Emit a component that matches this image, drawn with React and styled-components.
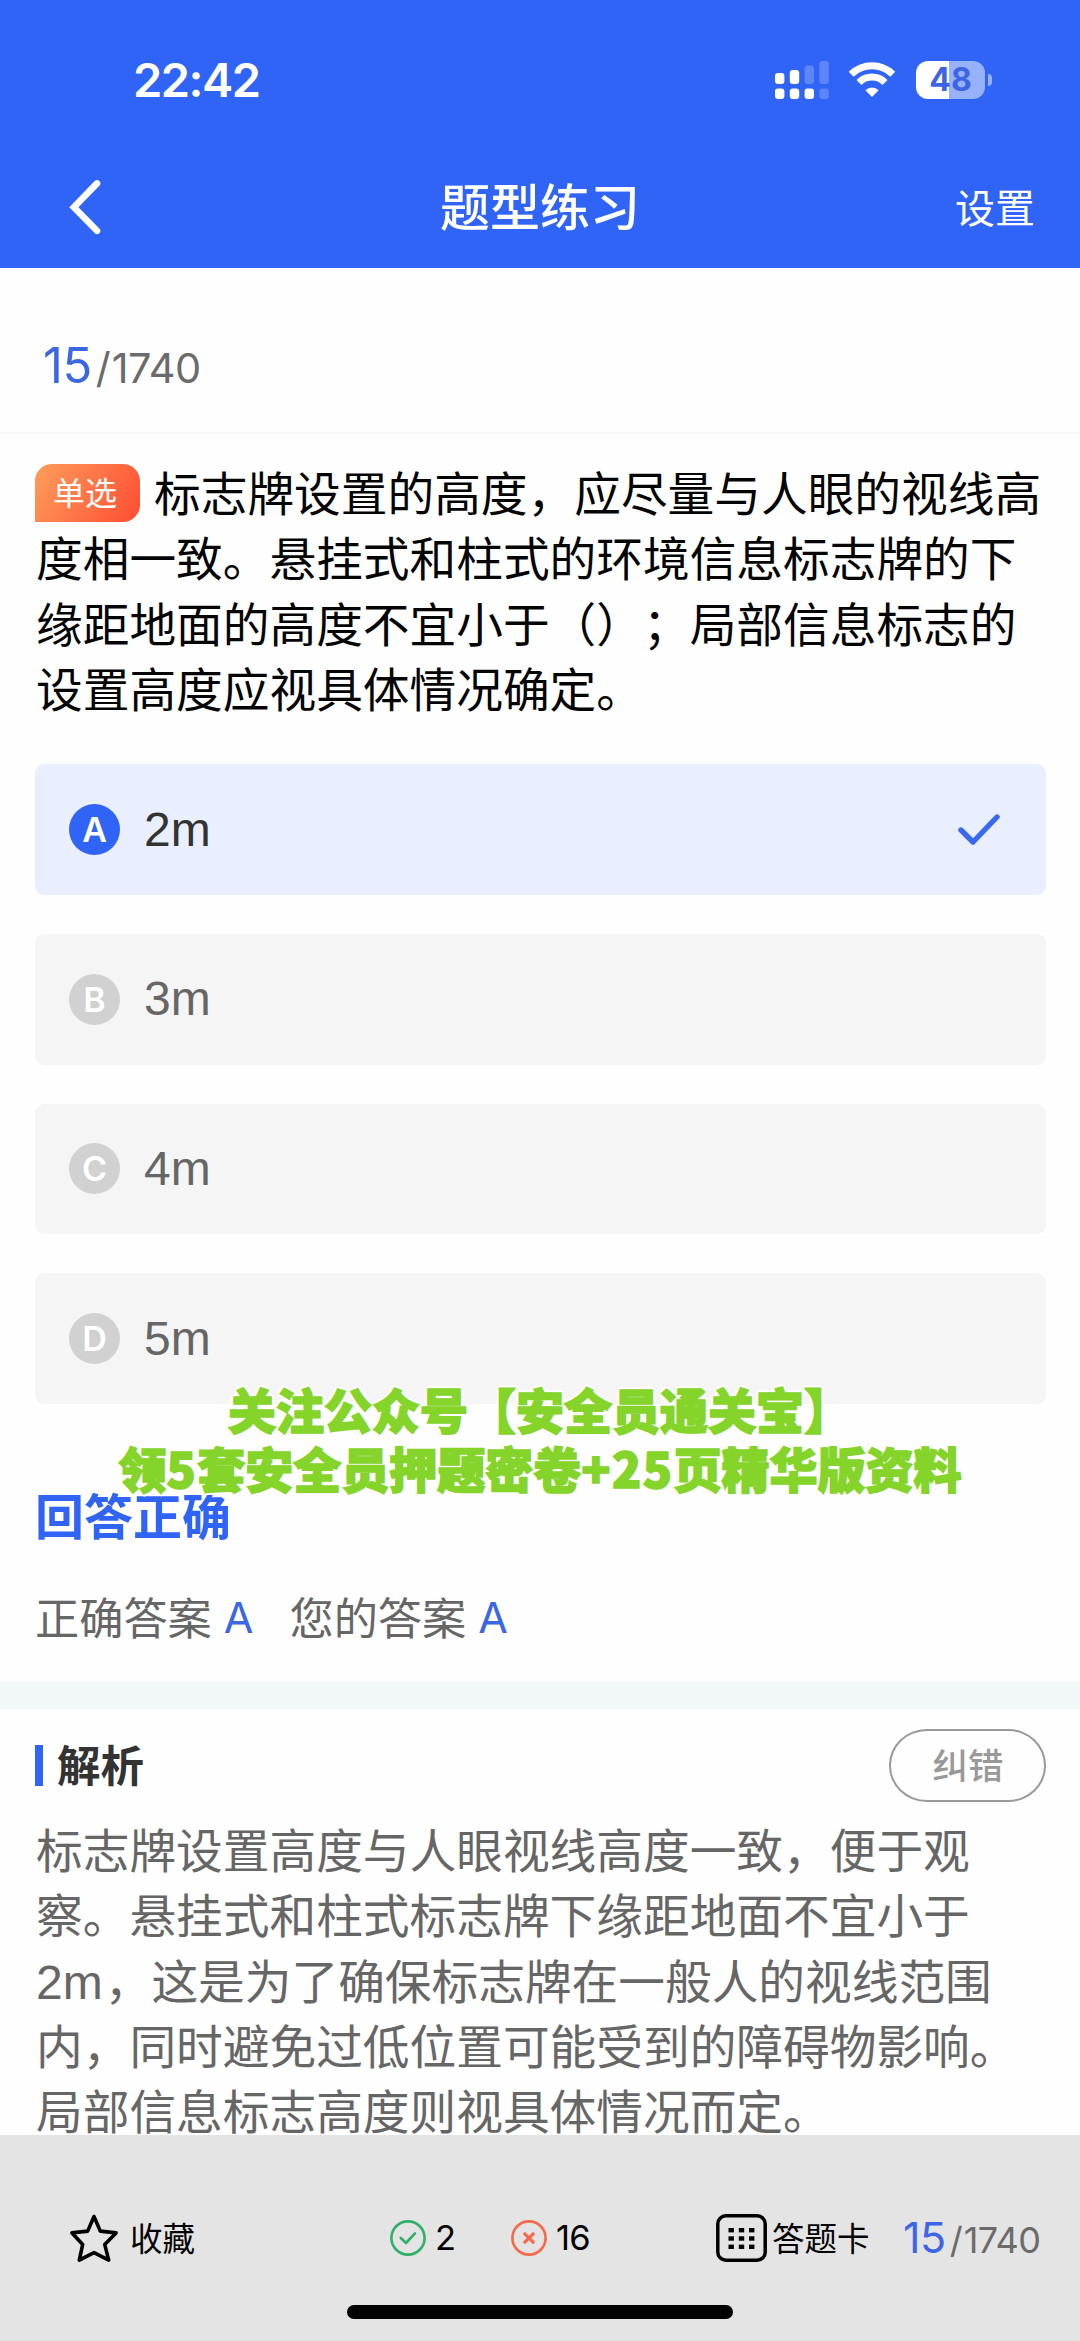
import React from "react";
import styled, { createGlobalStyle } from "styled-components";

const BLUE = "#3064f7";
const CJK = '"Noto Sans CJK SC", sans-serif';
const UI = 'Inter, "Noto Sans CJK SC", sans-serif';
const TEXT = '"Liberation Sans", "Noto Sans CJK SC", sans-serif';

const GlobalStyle = createGlobalStyle`
  *, *::before, *::after { box-sizing: border-box; }
  html, body { margin: 0; padding: 0; background: #fff; }
  body { text-spacing-trim: space-all; }
`;

const Screen = styled.div`
  position: relative;
  display: flex;
  flex-direction: column;
  width: 1080px;
  height: 2341px;
  overflow: hidden;
  background: #fefefe;
  font-family: ${CJK};
`;

const Header = styled.header`
  flex: none;
  height: 268px;
  background: ${BLUE};
  color: #fff;
`;

const StatusBar = styled.div`
  display: flex;
  justify-content: space-between;
  align-items: center;
  height: 160px;
  padding: 0 88px 0 133px;
`;

const Clock = styled.span`
  font: 600 47px/60px ${UI};
  letter-spacing: -1.5px;
`;

const StatusIcons = styled.div`
  display: flex;
  align-items: center;
`;

const Signal = styled.svg`
  width: 55px;
  height: 40px;
`;

const Wifi = styled.svg`
  width: 48px;
  height: 40px;
  margin-left: 18px;
`;

const Battery = styled.div`
  display: flex;
  align-items: center;
  justify-content: center;
  width: 69px;
  height: 38px;
  margin-left: 20px;
  border-radius: 12px;
  background: linear-gradient(90deg, #fff 33px, #98b1fb 33px);
  color: #3c65e6;
  font: 700 32px/38px ${UI};
`;

const BatteryCap = styled.span`
  width: 4px;
  height: 12px;
  margin-left: 3px;
  border-radius: 0 4px 4px 0;
  background: #98b1fb;
`;

const NavBar = styled.nav`
  display: grid;
  grid-template-columns: 200px 1fr 200px;
  align-items: center;
  height: 92px;
`;

const BackButton = styled.button`
  display: flex;
  width: 60px;
  margin-left: 60px;
  padding: 0;
  border: 0;
  background: none;
`;

const Title = styled.h1`
  margin: 0;
  padding-bottom: 5px;
  text-align: center;
  font: 500 50px/60px ${CJK};
`;

const Settings = styled.span`
  padding: 0 45px 1px 0;
  text-align: right;
  font: 400 40px/50px ${CJK};
`;

const ProgressRow = styled.div`
  flex: none;
  height: 166px;
  padding: 65px 0 0 43px;
  border-bottom: 2px solid #f7f7f7;
`;

const Counter = styled.div`
  font: 400 ${(p) => p.$total}px/66px ${UI};
  letter-spacing: ${(p) => p.$track}px;
  color: #6b6b6b;
  white-space: nowrap;

  b {
    font-size: ${(p) => p.$current}px;
    font-weight: 400;
    color: #3b66e6;
    margin-right: ${(p) => p.$gap}px;
  }

  i {
    font-style: normal;
    margin-right: 1.5px;
  }
`;

const Question = styled.p`
  flex: none;
  width: 1020px;
  margin: 29px 0 0 36px;
  color: #050505;
  font: 400 46.7px/65.3px ${TEXT};
`;

const Tag = styled.span`
  display: inline-block;
  width: 105px;
  height: 58px;
  margin: -6px 14px 0 -1px;
  padding-right: 5px;
  border-radius: 17px 17px 17px 0;
  background: linear-gradient(120deg, #ff9d5a, #ff4d33);
  color: #fff;
  text-align: center;
  font: 400 32px/55px ${CJK};
  vertical-align: 6px;
`;

const Options = styled.div`
  flex: none;
  display: flex;
  flex-direction: column;
  gap: 39px;
  margin: 40px 34px 0 35px;
`;

const Option = styled.div`
  display: flex;
  align-items: center;
  height: 130.7px;
  padding: 0 46px 0 34px;
  border-radius: 9px;
  background: ${(p) => (p.$selected ? "#e9effe" : "#f5f5f5")};
  color: ${(p) => (p.$selected ? "#333" : "#666")};
`;

const Letter = styled.span`
  width: 51px;
  height: 51px;
  border-radius: 50%;
  background: ${(p) => (p.$selected ? BLUE : "#d1d1d1")};
  color: #fff;
  text-align: center;
  font: 600 34px/51px ${UI};
`;

const OptionText = styled.span`
  flex: 1;
  padding-left: 24px;
  font: 400 48px/60px ${TEXT};
`;

const Verdict = styled.div`
  flex: none;
  margin: 77px 35px 0;
  color: ${BLUE};
  font: 700 49px/66px ${CJK};
`;

const Answers = styled.div`
  flex: none;
  display: flex;
  gap: 36px;
  margin: 39px 35px 0;
  color: #666;
  font: 400 44.2px/60px ${CJK};
`;

const Answer = styled.span`
  display: flex;
  gap: 12px;

  b {
    color: #3b66e6;
    font: 400 43px/62px ${UI};
  }
`;

const Divider = styled.div`
  flex: none;
  height: 27px;
  margin-top: 34px;
  background: #f2f7f8;
`;

const SectionHead = styled.div`
  flex: none;
  display: flex;
  align-items: center;
  height: 73px;
  margin: 20px 34px 0 35px;
`;

const Accent = styled.span`
  width: 8px;
  height: 41px;
  margin-right: 14px;
  background: ${BLUE};
`;

const SectionTitle = styled.h2`
  flex: 1;
  margin: 0;
  padding-bottom: 3px;
  color: #333;
  font: 700 43.5px/60px ${CJK};
`;

const ReportButton = styled.button`
  width: 157px;
  height: 73px;
  padding: 0 0 3px 1px;
  border: 2.5px solid #999;
  border-radius: 38px / 36px;
  background: none;
  color: #999;
  font: 500 35.5px/60px ${CJK};
`;

const Explanation = styled.p`
  flex: none;
  width: 1011px;
  margin: 18px 35px 0 36px;
  color: #666;
  font: 400 46.7px/65.3px ${TEXT};
`;

const Latin = styled.span`
  font-size: 48px;
  line-height: 1;
  margin-right: 2px;
`;

const Footer = styled.footer`
  position: absolute;
  left: 0;
  right: 0;
  bottom: 0;
  height: 206px;
  background: #e4e4e4;
  color: #050505;
`;

const Tools = styled.div`
  display: flex;
  align-items: center;
  height: 48px;
  margin-top: 79px;
  padding-left: 70px;
  font: 400 32.5px/46px ${CJK};
`;

const Tool = styled.div`
  display: flex;
  align-items: center;
  gap: ${(p) => p.$gap}px;
  width: ${(p) => p.$width}px;

  svg { flex: none; }
`;

const ToolLabel = styled.span`
  padding-bottom: 3px;
`;

const Count = styled.span`
  font: 400 34.5px/48px ${UI};
  letter-spacing: -0.8px;
`;

const HomeIndicator = styled.div`
  width: 386px;
  height: 14px;
  margin: 43px auto 0;
  border-radius: 7px;
  background: #000;
`;

const Promo = styled.div`
  position: absolute;
  top: 1379px;
  left: 0;
  width: 1080px;
  color: #84d42a;
  text-align: center;
  font: 900 48px/59px ${CJK};
  white-space: nowrap;
  -webkit-text-stroke: 1.6px #84d42a;
  text-shadow: 3px 0 0 #fff, -3px 0 0 #fff, 0 3px 0 #fff, 0 -3px 0 #fff,
    2px 2px 0 #fff, -2px 2px 0 #fff, 2px -2px 0 #fff, -2px -2px 0 #fff;

  span { letter-spacing: 1.5px; }
`;

const options = [
  { letter: "A", text: "2m", selected: true },
  { letter: "B", text: "3m" },
  { letter: "C", text: "4m" },
  { letter: "D", text: "5m" },
];

const SignalIcon = () => (
  <Signal viewBox="0 0 55 40" fill="#fff">
    <rect x="0" y="13" width="9.4" height="11" rx="3" />
    <rect x="14.8" y="10" width="9.4" height="14" rx="3" />
    <rect x="29.6" y="5.5" width="9.4" height="18.5" rx="3" opacity=".22" />
    <rect x="44.4" y="1" width="9.4" height="23" rx="3" opacity=".22" />
    <rect x="0" y="28.5" width="9.4" height="10.5" rx="3" />
    <rect x="14.8" y="28.5" width="9.4" height="10.5" rx="3" />
    <rect x="29.6" y="28.5" width="9.4" height="10.5" rx="3" />
    <rect x="44.4" y="28.5" width="9.4" height="10.5" rx="3" opacity=".22" />
  </Signal>
);

const WifiIcon = () => (
  <Wifi viewBox="0 0 48 40" fill="none" stroke="#fff" strokeWidth="7">
    <path d="M3.2 14.2a29.6 29.6 0 0 1 41.6 0" />
    <path d="M11 22.5a18.4 18.4 0 0 1 26 0" />
    <path d="M24 37l-6.6-6.8a9.6 9.6 0 0 1 13.2 0z" fill="#fff" stroke="none" />
  </Wifi>
);

const StarIcon = () => (
  <svg width="48" height="48" viewBox="0 0 48 48" fill="none" stroke="#000" strokeWidth="3.6" strokeLinejoin="round">
    <path d="M24 2.5l6.3 14.6 15.8 1.8-11.4 11.5 4 15.7L24 38.6 9.3 46.1l3.4-15.7L2 18.9l15.7-1.8z" />
  </svg>
);

const RightIcon = () => (
  <svg width="38" height="38" viewBox="0 0 38 38" fill="none" stroke="#2fb067" strokeWidth="2.6" strokeLinecap="round" strokeLinejoin="round">
    <circle cx="19" cy="19" r="16.6" />
    <path d="M11.8 19l5.2 5L26 14.4" />
  </svg>
);

const WrongIcon = () => (
  <svg width="38" height="38" viewBox="0 0 38 38" fill="none" stroke="#f5694a" strokeWidth="2.6" strokeLinecap="round">
    <circle cx="19" cy="19" r="16.6" />
    <path d="M14.8 14.8l8.4 8.4M23.2 14.8l-8.4 8.4" strokeWidth="3.2" />
  </svg>
);

const SheetIcon = () => (
  <svg width="51" height="48" viewBox="0 0 51 48">
    <rect x="1.8" y="1.8" width="47.4" height="44.4" rx="8" fill="none" stroke="#000" strokeWidth="3.5" />
    {[14, 22.3, 30.6].map((y) =>
      [12.5, 22.8, 33].map((x) => <rect key={`${x}-${y}`} x={x} y={y} width="5.4" height="4.4" />)
    )}
  </svg>
);

export default function App() {
  return (
    <Screen>
      <GlobalStyle />
      <Header>
        <StatusBar>
          <Clock>22:42</Clock>
          <StatusIcons>
            <SignalIcon />
            <WifiIcon />
            <Battery>48</Battery>
            <BatteryCap />
          </StatusIcons>
        </StatusBar>
        <NavBar>
          <BackButton aria-label="返回">
            <svg width="50" height="58" viewBox="0 0 50 58" fill="none" stroke="#fff" strokeWidth="6.6" strokeLinecap="round" strokeLinejoin="miter">
              <path d="M37 6.4L13.9 30.2l23.1 23.6" />
            </svg>
          </BackButton>
          <Title>题型练习</Title>
          <Settings>设置</Settings>
        </NavBar>
      </Header>

      <ProgressRow>
        <Counter $total={41.5} $current={49} $track={-0.5} $gap={4}>
          <b>15</b><i>/</i>1740
        </Counter>
      </ProgressRow>

      <Question>
        <Tag>单选</Tag>
        标志牌设置的高度，应尽量与人眼的视线高度相一致。悬挂式和柱式的环境信息标志牌的下缘距地面的高度不宜小于（）；局部信息标志的设置高度应视具体情况确定。
      </Question>

      <Options>
        {options.map((o) => (
          <Option key={o.letter} $selected={o.selected}>
            <Letter $selected={o.selected}>{o.letter}</Letter>
            <OptionText>{o.text}</OptionText>
            {o.selected && (
              <svg width="42" height="34" viewBox="0 0 42 34" fill="none" stroke="#3a68f0" strokeWidth="5.4" strokeLinecap="round" strokeLinejoin="round">
                <path d="M3 17l12 12L39 4" />
              </svg>
            )}
          </Option>
        ))}
      </Options>

      <Verdict>回答正确</Verdict>
      <Answers>
        <Answer>正确答案<b>A</b></Answer>
        <Answer>您的答案<b>A</b></Answer>
      </Answers>

      <Divider />

      <SectionHead>
        <Accent />
        <SectionTitle>解析</SectionTitle>
        <ReportButton>纠错</ReportButton>
      </SectionHead>
      <Explanation>
        标志牌设置高度与人眼视线高度一致，便于观察。悬挂式和柱式标志牌下缘距地面不宜小于<Latin>2m</Latin>，这是为了确保标志牌在一般人的视线范围内，同时避免过低位置可能受到的障碍物影响。局部信息标志高度则视具体情况而定。
      </Explanation>

      <Promo>
        <div>关注公众号【安全员通关宝】</div>
        <div>领<span>5</span>套安全员押题密卷<span>+25</span>页精华版资料</div>
      </Promo>

      <Footer>
        <Tools>
          <Tool $gap={12} $width={319}>
            <StarIcon />
            <ToolLabel>收藏</ToolLabel>
          </Tool>
          <Tool $gap={8} $width={121}>
            <RightIcon />
            <Count>2</Count>
          </Tool>
          <Tool $gap={8} $width={206}>
            <WrongIcon />
            <Count>16</Count>
          </Tool>
          <Tool $gap={5} $width={187}>
            <SheetIcon />
            <ToolLabel>答题卡</ToolLabel>
          </Tool>
          <Counter $total={36} $current={43} $track={-0.5} $gap={4}>
            <b>15</b><i>/</i>1740
          </Counter>
        </Tools>
        <HomeIndicator />
      </Footer>
    </Screen>
  );
}
